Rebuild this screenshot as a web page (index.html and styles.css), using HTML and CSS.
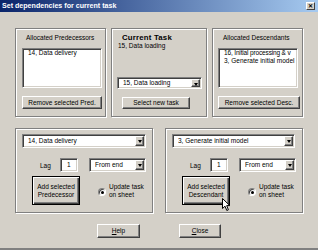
FILE: index.html
```html
<!DOCTYPE html>
<html lang="en">
<head>
    <meta charset="UTF-8">
    <title>Set dependencies for current task</title>
    <link rel="stylesheet" href="styles.css">
</head>
<body>
    <div class="window">
        <div class="titlebar">
            <span>Set dependencies for current task</span>
            <span class="close-box">&#x2715;</span>
        </div>
        <div class="content">
            <div class="top-row">
                <div class="frame frame-side">
                    <div class="frame-title">Allocated Predecessors</div>
                    <div class="listbox">
                        <div>14, Data delivery</div>
                    </div>
                    <div class="btn btn-remove">Remove selected Pred.</div>
                </div>
                <div class="frame frame-mid">
                    <div class="cur-title">Current Task</div>
                    <div class="cur-name">15, Data loading</div>
                    <div class="combo combo-cur">
                        <span class="combo-text">15, Data loading</span>
                        <span class="drop"></span>
                    </div>
                    <div class="btn btn-select">Select new task</div>
                </div>
                <div class="frame frame-side frame-right">
                    <div class="frame-title">Allocated Descendants</div>
                    <div class="listbox">
                        <div class="tight">16, Initial processing &amp; v</div>
                        <div>3, Generate initial model</div>
                    </div>
                    <div class="btn btn-remove btn-remove-desc">Remove selected Desc.</div>
                </div>
            </div>

            <div class="bottom-row">
                <div class="frame frame-add">
                    <div class="combo combo-task">
                        <span class="combo-text">14, Data delivery</span>
                        <span class="drop"></span>
                    </div>
                    <div class="lag-row">
                        <span class="lag-label">Lag</span>
                        <div class="textbox">1</div>
                        <div class="combo combo-lag">
                            <span class="combo-text">From end</span>
                            <span class="drop"></span>
                        </div>
                    </div>
                    <div class="add-row">
                        <div class="btn btn-add">Add selected<br>Predecessor</div>
                        <div class="radio-opt">
                            <span class="radio"></span>
                            <span>Update task<br>on sheet</span>
                        </div>
                    </div>
                </div>
                <div class="frame frame-add frame-add-right">
                    <div class="combo combo-task">
                        <span class="combo-text">3, Generate initial model</span>
                        <span class="drop"></span>
                    </div>
                    <div class="lag-row">
                        <span class="lag-label">Lag</span>
                        <div class="textbox">1</div>
                        <div class="combo combo-lag">
                            <span class="combo-text">From end</span>
                            <span class="drop"></span>
                        </div>
                    </div>
                    <div class="add-row">
                        <div class="btn btn-add">Add selected<br>Descendant</div>
                        <div class="radio-opt">
                            <span class="radio"></span>
                            <span>Update task<br>on sheet</span>
                        </div>
                    </div>
                </div>
            </div>

            <div class="footer">
                <div class="btn btn-foot"><u>H</u>elp</div>
                <div class="btn btn-foot"><u>C</u>lose</div>
            </div>
        </div>

        <!-- mouse pointer over the add button -->
        <svg class="cursor" width="9" height="14" viewBox="0 0 9 14">
            <path d="M0.5 0.5 L0.5 10.5 L3 8.2 L4.8 12.5 L6.4 11.8 L4.7 7.6 L7.8 7.6 Z" fill="#fff" stroke="#000" stroke-width="1"/>
        </svg>
    </div>
</body>
</html>
```

FILE: styles.css
```css
* {
    box-sizing: border-box;
}
body {
    margin: 0;
    font-family: "Liberation Sans", Arial, sans-serif;
    font-size: 6.5px;
    color: #000;
}
.window {
    position: relative;
    width: 318px;
    height: 250px;
    background: #d4d0c8;
    border-bottom: 2px solid #808080;
    display: flex;
    flex-direction: column;
}
.titlebar {
    height: 12px;
    background: linear-gradient(to right, #0a246a, #a6caf0);
    color: #fff;
    font-weight: bold;
    font-size: 7.1px;
    display: flex;
    align-items: center;
    justify-content: space-between;
    padding: 0 3px 0 2px;
}
.close-box {
    width: 9px;
    height: 8px;
    background: #d4d0c8;
    color: #000;
    font-size: 6px;
    line-height: 6px;
    text-align: center;
    border: 1px solid;
    border-color: #fff #404040 #404040 #fff;
}
.content {
    padding: 16px 15px 0;
}

/* etched group frames */
.frame {
    border: 1px solid #808080;
    box-shadow: inset 1px 1px 0 #fff, 1px 1px 0 #fff;
}
.top-row {
    display: flex;
    gap: 5px;
    height: 89px;
}
.frame-side {
    width: 91px;
    padding: 5px 0 0 6px;
}
.frame-right {
    padding-left: 5px;
}
.frame-title {
    line-height: 8px;
    padding-left: 4px;
}
.frame-right .frame-title {
    padding-left: 5px;
}
.listbox {
    margin-top: 6px;
    width: 80px;
    height: 40px;
    background: #fff;
    border: 1px solid;
    border-color: #808080 #fff #fff #808080;
    box-shadow: inset 1px 1px 0 #404040, inset -1px -1px 0 #d4d0c8;
    padding: 0 0 0 5px;
    line-height: 8px;
    white-space: nowrap;
}
.listbox .tight {
    letter-spacing: -0.15px;
}
.frame-mid {
    width: 96px;
    padding: 5px 0 0 5px;
}
.cur-title {
    font-weight: bold;
    font-size: 7.8px;
    letter-spacing: 0.2px;
    line-height: 8px;
    padding-left: 5px;
}
.cur-name {
    line-height: 8px;
    padding-left: 1px;
}

/* buttons */
.btn {
    background: #d4d0c8;
    border: 1px solid;
    border-color: #fff #404040 #404040 #fff;
    box-shadow: inset -1px -1px 0 #808080;
    display: flex;
    align-items: center;
    justify-content: center;
    text-align: center;
    line-height: 8px;
}
.btn-remove {
    margin-top: 8px;
    width: 80px;
    height: 13px;
}
.btn-remove-desc {
    width: 82px;
}
.btn-select {
    margin: 8px 0 0 5px;
    width: 68px;
    height: 12px;
}

/* combo boxes and text boxes */
.combo, .textbox {
    background: #fff;
    border: 1px solid;
    border-color: #808080 #fff #fff #808080;
    box-shadow: inset 1px 1px 0 #404040, inset -1px -1px 0 #d4d0c8;
    line-height: 8px;
}
.combo {
    display: flex;
    align-items: center;
    padding: 1px 1px 1px 5px;
}
.combo-text {
    flex: 1;
    white-space: nowrap;
    overflow: hidden;
}
.drop {
    width: 9px;
    align-self: stretch;
    background: #d4d0c8;
    border: 1px solid;
    border-color: #fff #404040 #404040 #fff;
    box-shadow: inset -1px -1px 0 #808080;
    position: relative;
}
.drop::after {
    content: "";
    position: absolute;
    left: 1.5px;
    top: 3px;
    border-left: 2.5px solid transparent;
    border-right: 2.5px solid transparent;
    border-top: 3px solid #000;
}
.combo-cur {
    margin-top: 27px;
    width: 85px;
    height: 12px;
}

/* bottom group */
.bottom-row {
    margin-top: 11px;
    display: flex;
    gap: 12px;
    height: 85px;
}
.frame-add {
    width: 138px;
    padding: 5px 0 0 6px;
}
.combo-task {
    width: 124px;
    height: 14px;
}
.frame-add-right .combo-task {
    width: 123px;
}
.lag-row {
    margin-top: 10px;
    display: flex;
    align-items: center;
    height: 14px;
}
.lag-label {
    width: 38px;
    padding-left: 18px;
}
.textbox {
    width: 18px;
    height: 14px;
    padding: 2px 0 0 6px;
}
.combo-lag {
    margin-left: 11px;
    width: 57px;
    height: 14px;
}
.add-row {
    margin-top: 4px;
    display: flex;
    align-items: center;
}
.btn-add {
    margin-left: 10px;
    width: 48px;
    height: 29px;
    border: 1px solid #000;
    box-shadow: inset 1px 1px 0 #fff, inset -1px -1px 0 #404040, inset -2px -2px 0 #808080;
}
.radio-opt {
    margin-left: 18px;
    display: flex;
    align-items: center;
    gap: 3px;
    line-height: 8px;
}
.radio {
    width: 8px;
    height: 8px;
    border-radius: 50%;
    background: #fff;
    border: 1px solid;
    border-color: #808080 #fff #fff #808080;
    box-shadow: inset 1px 1px 0 #404040;
    position: relative;
    margin-top: 3px;
}
.radio::after {
    content: "";
    position: absolute;
    left: 2px;
    top: 2px;
    width: 3px;
    height: 3px;
    border-radius: 50%;
    background: #000;
}

.footer {
    margin-top: 11px;
    display: flex;
    justify-content: center;
    gap: 39px;
}
.btn-foot {
    width: 43px;
    height: 14px;
}
.btn-foot + .btn-foot {
    width: 42px;
}

.cursor {
    position: absolute;
    left: 222px;
    top: 198px;
}
```
